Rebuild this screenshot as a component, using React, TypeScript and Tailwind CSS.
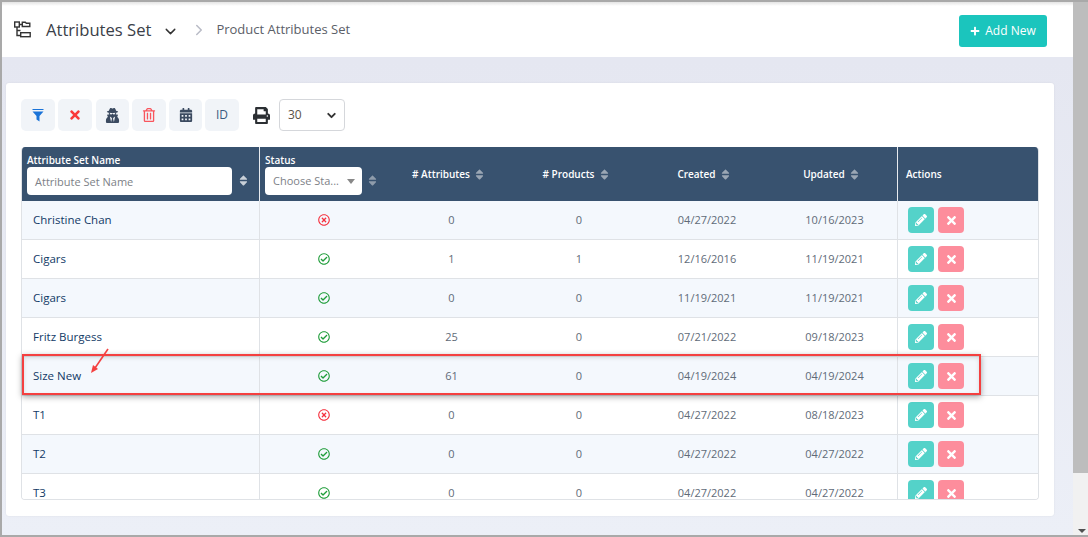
import { ChevronDown, ChevronRight } from 'lucide-react';
import {
  FaCalendarAlt,
  FaPencilAlt,
  FaPlus,
  FaPrint,
  FaRegCheckCircle,
  FaRegTimesCircle,
  FaRegTrashAlt,
  FaSort,
  FaTimes,
  FaUserSecret,
} from 'react-icons/fa';

const rows = [
  { name: 'Christine Chan', active: false, attrs: 0, products: 0, created: '04/27/2022', updated: '10/16/2023' },
  { name: 'Cigars', active: true, attrs: 1, products: 1, created: '12/16/2016', updated: '11/19/2021' },
  { name: 'Cigars', active: true, attrs: 0, products: 0, created: '11/19/2021', updated: '11/19/2021' },
  { name: 'Fritz Burgess', active: true, attrs: 25, products: 0, created: '07/21/2022', updated: '09/18/2023' },
  { name: 'Size New', active: true, attrs: 61, products: 0, created: '04/19/2024', updated: '04/19/2024' },
  { name: 'T1', active: false, attrs: 0, products: 0, created: '04/27/2022', updated: '08/18/2023' },
  { name: 'T2', active: true, attrs: 0, products: 0, created: '04/27/2022', updated: '04/27/2022' },
  { name: 'T3', active: true, attrs: 0, products: 0, created: '04/27/2022', updated: '04/27/2022' },
];

const columns = 'grid grid-cols-[238px_127px_127px_128px_128px_128px_1fr]';

function SortHeader({ label }: { label: string }) {
  return (
    <div className="flex items-center justify-center gap-[3px] pr-[3px] text-[10px] font-semibold text-white">
      {label}
      <FaSort className="text-[13px] text-[#9aa6b4]" />
    </div>
  );
}

function ToolButton({ children, className }: { children: React.ReactNode; className: string }) {
  return (
    <button className={`flex h-[32px] items-center justify-center rounded-[5px] bg-[#f1f4f8] ${className}`}>
      {children}
    </button>
  );
}

export default function App() {
  return (
    <div className="relative flex h-[537px] w-[1088px] overflow-hidden border-t-[2px] border-b-[2px] border-l-[2px] border-[#a9a9a9] bg-white font-['Open_Sans',sans-serif]">
      <div className="flex min-w-0 flex-1 flex-col">
        {/* Top bar */}
        <div className="flex h-[55px] shrink-0 items-center bg-gradient-to-b from-[#e4e4e4] to-white to-[4px] pt-[1px] pr-[26px] pl-[12px]">
          <svg width="17" height="17" viewBox="0 0 17 17" fill="none" stroke="#333" strokeWidth="1.4" className="mt-[-1px]">
            <rect x="0.7" y="1" width="4.6" height="5" />
            <path d="M3 6v8.5h3.5M3 9.5h3.5" />
            <path d="M5.3 3.5h3V1.2h3l1 1h3.5v3.3H8.3V3.5" />
            <rect x="6.7" y="11.7" width="9.5" height="4" />
          </svg>
          <span className="ml-[15px] text-[16.6px] text-[#3b4048]">Attributes Set</span>
          <ChevronDown className="ml-[11px] mt-[2px] h-[17px] w-[17px] text-[#333]" strokeWidth={2} />
          <ChevronRight className="ml-[11px] h-[18px] w-[18px] text-[#b9bbc6]" strokeWidth={2} />
          <span className="ml-[8px] text-[13px] text-[#5b6068]">Product Attributes Set</span>
          <button className="mt-[2px] ml-auto flex h-[32px] w-[88px] items-center justify-center gap-[5px] rounded-[3px] bg-[#1bc5bd] text-[12px] text-white">
            <FaPlus className="text-[10px]" />
            Add New
          </button>
        </div>

        {/* Content */}
        <div className="flex min-h-0 flex-1 flex-col bg-gradient-to-b from-[#e5e7f1] to-[#eceff7] pt-[26px] pr-[19px] pl-[4px]">
          <div className="h-[433px] rounded-[3px] bg-white pt-[16px] pr-[15px] pl-[15px] shadow-[0_0_2px_rgba(0,0,0,0.08)]">
            {/* Toolbar */}
            <div className="flex h-[32px] items-center">
              <ToolButton className="w-[34px]">
                <svg width="12" height="13" viewBox="0 0 12 13" fill="#1a73d8">
                  <rect x="0.5" y="0" width="11" height="1" />
                  <path d="M0.5 2.5h11L7.5 7v5.5L4.5 10.5V7z" />
                </svg>
              </ToolButton>
              <ToolButton className="ml-[3px] w-[34px]">
                <FaTimes className="text-[14px] text-[#f93a3a]" />
              </ToolButton>
              <ToolButton className="ml-[4px] w-[33px]">
                <FaUserSecret className="text-[15px] text-[#3b4a60]" />
              </ToolButton>
              <ToolButton className="ml-[3px] w-[34px]">
                <FaRegTrashAlt className="text-[14px] text-[#f9555d]" />
              </ToolButton>
              <ToolButton className="ml-[3px] w-[33px]">
                <FaCalendarAlt className="text-[14px] text-[#3b4a60]" />
              </ToolButton>
              <ToolButton className="ml-[3px] w-[34px]">
                <span className="text-[12px] text-[#3c5a80]">ID</span>
              </ToolButton>
              <FaPrint className="ml-[14px] text-[17px] text-[#2b2f33]" />
              <div className="ml-[9px] flex h-[32px] w-[66px] items-center justify-between rounded-[4px] border border-[#d5d7db] pr-[6px] pl-[8px]">
                <span className="text-[12px] text-[#5a5248]">30</span>
                <ChevronDown className="h-[13px] w-[13px] text-[#333]" strokeWidth={3.5} />
              </div>
            </div>

            {/* Table */}
            <div className="mt-[16px] h-[353px] overflow-hidden rounded-[4px] border-x border-b border-[#dfe2e6]">
              <div className={`${columns} h-[54px] items-center bg-[#38526f]`}>
                <div className="flex h-full flex-col justify-center border-r border-[#e8ebef] pr-[9px] pl-[5px]">
                  <span className="text-[10px] leading-[12px] font-semibold text-white">Attribute Set Name</span>
                  <div className="mt-[1px] flex items-center">
                    <div className="flex h-[28px] w-[207px] items-center rounded-[4px] bg-white pt-[3px] pl-[8px] text-[11px] text-[#7d8187]">
                      Attribute Set Name
                    </div>
                    <FaSort className="ml-[5px] text-[13px] text-[#c9d0d8]" />
                  </div>
                </div>
                <div className="flex h-full flex-col justify-center pl-[5px]">
                  <span className="text-[10px] leading-[12px] font-semibold text-white">Status</span>
                  <div className="mt-[1px] flex items-center">
                    <div className="flex h-[28px] w-[97px] items-center justify-between rounded-[4px] bg-white pt-[1px] pr-[7px] pl-[8px] text-[11px] text-[#7d8187]">
                      Choose Sta...
                      <span className="h-0 w-0 border-x-[4px] border-t-[5px] border-x-transparent border-t-[#888]" />
                    </div>
                    <FaSort className="ml-[4px] text-[13px] text-[#8f9cab]" />
                  </div>
                </div>
                <SortHeader label="# Attributes" />
                <SortHeader label="# Products" />
                <SortHeader label="Created" />
                <div className="flex h-full items-center justify-center gap-[3px] border-r border-[#e8ebef] pr-[3px] text-[10px] font-semibold text-white">
                  Updated
                  <FaSort className="text-[13px] text-[#9aa6b4]" />
                </div>
                <div className="pl-[8px] text-[10px] font-semibold text-white">Actions</div>
              </div>

              {rows.map((row, index) => (
                <div
                  key={index}
                  className={`${columns} h-[39px] items-center border-b border-[#dfe2e6] ${index % 2 === 0 ? 'bg-[#f4f8fd]' : 'bg-white'}`}
                >
                  <div className="flex h-full items-center border-r border-[#dfe2e6] pl-[11px] text-[11.5px] text-[#123a66]">
                    {row.name}
                  </div>
                  <div className="flex justify-center">
                    {row.active ? (
                      <FaRegCheckCircle className="text-[12px] text-[#1f9d3a]" />
                    ) : (
                      <FaRegTimesCircle className="text-[12px] text-[#f5323f]" />
                    )}
                  </div>
                  <div className="pl-[2px] text-center text-[11px] text-[#5f6b78]">{row.attrs}</div>
                  <div className="pl-[2px] text-center text-[11px] text-[#5f6b78]">{row.products}</div>
                  <div className="pl-[2px] text-center text-[11px] text-[#5f6b78]">{row.created}</div>
                  <div className="flex h-full items-center justify-center border-r border-[#dfe2e6] pl-[2px] text-[11px] text-[#5f6b78]">
                    {row.updated}
                  </div>
                  <div className="flex items-center gap-[4px] pl-[10px]">
                    <button className="flex h-[26px] w-[26px] items-center justify-center rounded-[4px] bg-[#54d2c9]">
                      <FaPencilAlt className="text-[12px] text-white" />
                    </button>
                    <button className="flex h-[26px] w-[26px] items-center justify-center rounded-[4px] bg-[#fd8d9c]">
                      <FaTimes className="text-[13px] text-white" />
                    </button>
                  </div>
                </div>
              ))}
            </div>
          </div>
        </div>
      </div>

      {/* Scrollbar */}
      <div className="flex w-[15px] shrink-0 flex-col bg-[#f1f1f1]">
        <div className="h-[471px] bg-[#bdbdbd]" />
        <div className="mt-auto mb-[2px] flex justify-center pl-[2px]">
          <span className="h-0 w-0 border-x-[4px] border-t-[4px] border-x-transparent border-t-[#505050]" />
        </div>
      </div>

      {/* Red annotation over the Size New row */}
      <div className="absolute top-[352px] left-[20px] h-[41px] w-[959px] border-[2px] border-[#f44040] shadow-[0_2px_6px_rgba(0,0,0,0.35),inset_0_2px_4px_rgba(0,0,0,0.12)]" />
      <svg className="absolute top-[344px] left-[86px]" width="26" height="30" viewBox="0 0 26 30" fill="none">
        <path d="M20 3 L7 22" stroke="#f44040" strokeWidth="1.6" />
        <path d="M3 27 L5 19 L10 23 Z" fill="#f44040" />
      </svg>
    </div>
  );
}
